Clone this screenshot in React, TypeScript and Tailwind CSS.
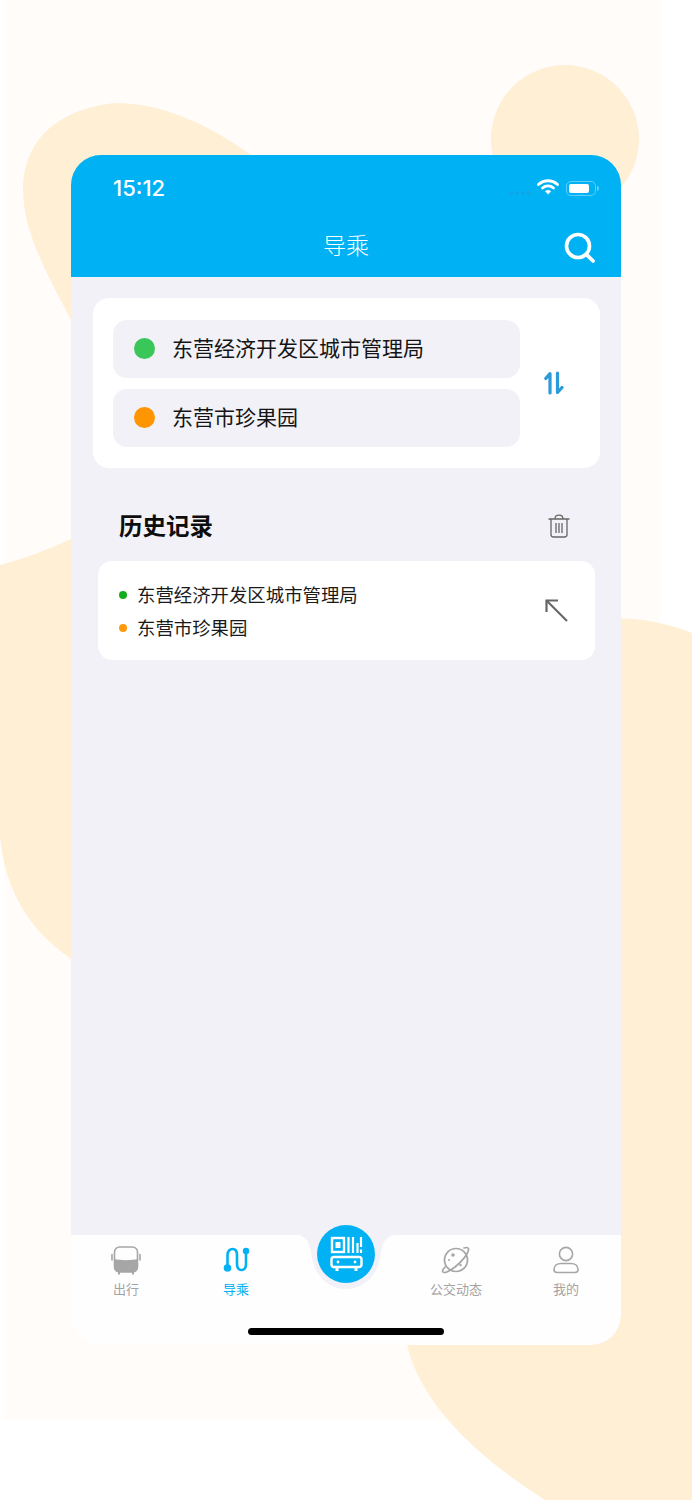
import React from 'react';

const CJK = { fontFamily: '"Noto Sans CJK SC", "Noto Sans", sans-serif' };

function Backdrop() {
  return (
    <svg className="absolute inset-0" width="692" height="1500" viewBox="0 0 692 1500">
      <rect x="4" y="0" width="656" height="1420" fill="#fffcf9" />
      <circle cx="565" cy="139" r="74" fill="#feefd5" />
      <path d="M115 103C70 108 24 130 23 190C24 235 48 275 71 320L251 155C205 122 160 103 115 103Z" fill="#feefd5" />
      <path d="M0 565Q35 556 80 535L80 964C30 935 5 890 0 837Z" fill="#feefd5" />
      <path d="M610 618Q655 618 692 633L692 1500L545 1500C490 1465 420 1410 406 1340L406 1300L610 1300Z" fill="#feefd5" />
    </svg>
  );
}

function StatusBar() {
  return (
    <div className="flex items-center justify-between h-[66px] pl-[42px] pr-[25px] text-white">
      <span className="text-[22px] font-medium leading-none" style={{ fontFamily: 'Inter, sans-serif' }}>15:12</span>
      <div className="flex items-center">
        <div className="flex gap-[2px] mt-[10px] mr-[6px]">
          {[0, 1, 2, 3].map(i => <span key={i} className="w-[4px] h-[4px] rounded-full bg-[#10a5e4]" />)}
        </div>
        <svg width="22" height="16" viewBox="0 0 22 16" fill="none" stroke="white" strokeLinecap="round" className="mr-[7px] -mt-[2px]">
          <path d="M1.5 5.5C7 0.5 15 0.5 20.5 5.5" strokeWidth="2.8" />
          <path d="M5.5 9C8.5 6.2 13.5 6.2 16.5 9" strokeWidth="2.8" />
          <path d="M11 15L8.4 12.2C10 11 12 11 13.6 12.2Z" fill="white" strokeWidth="0.6" />
        </svg>
        <div className="relative w-[30px] h-[15px] rounded-[5px] border border-[#5fcdf7] p-[2px]">
          <div className="w-[20px] h-full rounded-[2px] bg-white" />
          <span className="absolute -right-[4px] top-[4px] w-[2px] h-[5px] rounded-r bg-[#5fcdf7]" />
        </div>
      </div>
    </div>
  );
}

function Header() {
  return (
    <div className="bg-[#00b2f3] h-[122px]">
      <StatusBar />
      <div className="relative h-[56px] flex items-center justify-center">
        <span className="text-[23px] font-light text-white -mt-[10px]" style={CJK}>导乘</span>
        <svg width="32" height="32" viewBox="0 0 32 32" fill="none" stroke="white" className="absolute right-[25px] top-[11px]">
          <circle cx="14" cy="14" r="11.5" strokeWidth="3.6" />
          <path d="M22.5 22.5L29 29" strokeWidth="3.8" strokeLinecap="round" />
        </svg>
      </div>
    </div>
  );
}

function PlaceInput({ color, text }: { color: string; text: string }) {
  return (
    <div className="flex items-center h-[58px] rounded-[14px] bg-[#f2f1f7] pl-[21px]">
      <span className={`w-[21px] h-[21px] rounded-full ${color}`} />
      <span className="ml-[17px] -mt-[2px] text-[21px] text-[#151515]" style={CJK}>{text}</span>
    </div>
  );
}

function RouteCard() {
  return (
    <div className="flex items-center bg-white rounded-[16px] h-[170px] pl-[20px]">
      <div className="w-[407px] flex flex-col gap-[11px]">
        <PlaceInput color="bg-[#39c75a]" text="东营经济开发区城市管理局" />
        <PlaceInput color="bg-[#ff9500]" text="东营市珍果园" />
      </div>
      <svg width="20" height="24" viewBox="0 0 20 24" fill="none" stroke="#2a9ad9" strokeWidth="3.2" className="ml-[24px]" strokeLinecap="round" strokeLinejoin="round">
        <path d="M6 22V2.5L1.8 7.5" />
        <path d="M13.5 2V21.5L18 16.5" />
      </svg>
    </div>
  );
}

function HistoryCard() {
  return (
    <div className="mx-[5px] flex items-center justify-between bg-white rounded-[14px] h-[99px] pl-[21px] pr-[27px]">
      <div className="flex flex-col gap-[8px] mt-[2px]">
        <div className="flex items-center h-[25px]">
          <span className="w-[8px] h-[8px] rounded-full bg-[#12ad1a]" />
          <span className="ml-[10px] text-[18.4px] text-[#1a1a1a]" style={CJK}>东营经济开发区城市管理局</span>
        </div>
        <div className="flex items-center h-[25px]">
          <span className="w-[8px] h-[8px] rounded-full bg-[#ff9a0e]" />
          <span className="ml-[10px] text-[18.4px] text-[#1a1a1a]" style={CJK}>东营市珍果园</span>
        </div>
      </div>
      <svg width="23" height="23" viewBox="0 0 23 23" fill="none" stroke="#666" strokeWidth="2.2">
        <path d="M1.5 13V1.5H13" />
        <path d="M1.5 1.5L22 22" />
      </svg>
    </div>
  );
}

function BusIcon() {
  return (
    <svg width="30" height="30" viewBox="0 0 30 30" fill="none">
      <rect x="3.5" y="2" width="23" height="25" rx="5" stroke="#a6a6a6" strokeWidth="1.6" />
      <path d="M3 14C9 15.5 21 15.5 27 14V22C27 25 25 27 22 27H8C5 27 3 25 3 22Z" fill="#a6a6a6" />
      <path d="M1 9.5V15M29 9.5V15" stroke="#a6a6a6" strokeWidth="1.6" strokeLinecap="round" />
      <path d="M8 27V29.5M22 27V29.5" stroke="#a6a6a6" strokeWidth="2" />
    </svg>
  );
}

function RouteIcon() {
  return (
    <svg width="30" height="30" viewBox="0 0 30 30" fill="none">
      <path d="M6.5 22V10C6.5 6 9 4 11.5 4C14 4 16 6 16 10V19C16 23 18 25 20.5 25C23 25 25 23 25 19V6" stroke="#00b2f3" strokeWidth="2.6" />
      <circle cx="6.5" cy="23" r="3.8" fill="#00b2f3" />
      <circle cx="25" cy="6" r="3.2" fill="#00b2f3" />
    </svg>
  );
}

function PlanetIcon() {
  return (
    <svg width="30" height="30" viewBox="0 0 30 30" fill="none" stroke="#a6a6a6" strokeWidth="1.7">
      <circle cx="15" cy="15" r="11.5" />
      <path d="M23 3C26 2 28 2.5 27.5 5C26.5 10 20 17 14 22C8 26.5 3.5 28.5 2 27C1 26 2 24 4 22" strokeLinecap="round" />
      <circle cx="12" cy="10" r="1.8" fill="#a6a6a6" stroke="none" />
      <circle cx="8" cy="15" r="1" fill="#a6a6a6" stroke="none" />
      <circle cx="19.5" cy="20" r="1.2" fill="#a6a6a6" stroke="none" />
    </svg>
  );
}

function UserIcon() {
  return (
    <svg width="30" height="30" viewBox="0 0 30 30" fill="none" stroke="#a6a6a6" strokeWidth="1.6">
      <circle cx="15" cy="9" r="6.6" />
      <path d="M3 24.5C3 20.5 6.5 18.5 10 18.5H20C23.5 18.5 27 20.5 27 24.5C27 26.5 26 27.5 24 27.5H6C4 27.5 3 26.5 3 24.5Z" />
    </svg>
  );
}

function QrButton() {
  return (
    <div className="absolute left-[225px] -top-[10px] w-[100px] h-[64px] flex justify-center">
      <svg width="100" height="54" viewBox="0 0 100 54" className="absolute left-0 top-[10px]">
        <path d="M0 0C10 0 14 8 15.5 20C18 40 32 54 50 54C68 54 82 40 84.5 20C86 8 90 0 100 0Z" fill="#f2f1f7" />
      </svg>
      <div className="relative w-[58px] h-[58px] rounded-full bg-[#00b2f3] flex items-center justify-center">
        <svg width="36" height="36" viewBox="0 0 36 36" fill="none" stroke="white" strokeWidth="2.4">
          <rect x="4" y="2" width="12" height="14" />
          <rect x="7.5" y="6" width="5" height="6" fill="white" stroke="none" />
          <path d="M20.5 1V17M25 1V17M29.5 7V17M33 1V11M33 13.5V17" strokeWidth="2.2" />
          <rect x="3.5" y="21" width="30" height="10" rx="2.5" />
          <path d="M9 31V35M28 31V35" strokeWidth="3" />
          <circle cx="10" cy="26" r="1.4" fill="white" stroke="none" />
          <circle cx="27" cy="26" r="1.4" fill="white" stroke="none" />
        </svg>
      </div>
    </div>
  );
}

function TabItem({ icon, label, active }: { icon: React.ReactNode; label: string; active?: boolean }) {
  return (
    <div className="flex flex-col items-center">
      <div className="h-[30px] flex items-center justify-center">{icon}</div>
      <span className={`mt-[5px] text-[13px] leading-[18px] ${active ? 'text-[#00b2f3]' : 'text-[#a3a3a3]'}`} style={CJK}>{label}</span>
    </div>
  );
}

function TabBar() {
  return (
    <div className="relative h-[110px] bg-[#fffefe] rounded-b-[30px]">
      <div className="grid grid-cols-5 pt-[10px]">
        <TabItem icon={<BusIcon />} label="出行" />
        <TabItem icon={<RouteIcon />} label="导乘" active />
        <div />
        <TabItem icon={<PlanetIcon />} label="公交动态" />
        <TabItem icon={<UserIcon />} label="我的" />
      </div>
      <QrButton />
      <div className="absolute left-[177px] bottom-[10px] w-[196px] h-[7px] rounded-full bg-black" />
    </div>
  );
}

export default function App() {
  return (
    <div className="relative w-[692px] h-[1500px] overflow-hidden bg-white" style={CJK}>
      <Backdrop />
      <div className="relative ml-[71px] w-[550px] pt-[155px]">
        <div className="h-[1190px] flex flex-col rounded-[30px] overflow-hidden">
          <Header />
          <div className="flex-1 bg-[#f2f1f7] pl-[22px] pr-[21px] pt-[21px]">
            <RouteCard />
            <div className="flex items-center justify-between h-[93px] pl-[26px] pr-[30px]">
              <span className="text-[23.5px] font-bold text-[#0d0d0d] mt-[22px]" style={CJK}>历史记录</span>
              <svg width="22" height="24" viewBox="0 0 22 24" fill="none" stroke="#666" strokeWidth="1.3" className="mt-[22px]">
                <path d="M0.5 5H21.5M7 5C7 2.5 8 1.2 11 1.2C14 1.2 15 2.5 15 5" />
                <path d="M3 5V20.5C3 22 4 23 5.5 23H16.5C18 23 19 22 19 20.5V5" />
                <path d="M8 9V19M11 9V19M14 9V19" />
              </svg>
            </div>
            <HistoryCard />
          </div>
          <TabBar />
        </div>
      </div>
    </div>
  );
}
